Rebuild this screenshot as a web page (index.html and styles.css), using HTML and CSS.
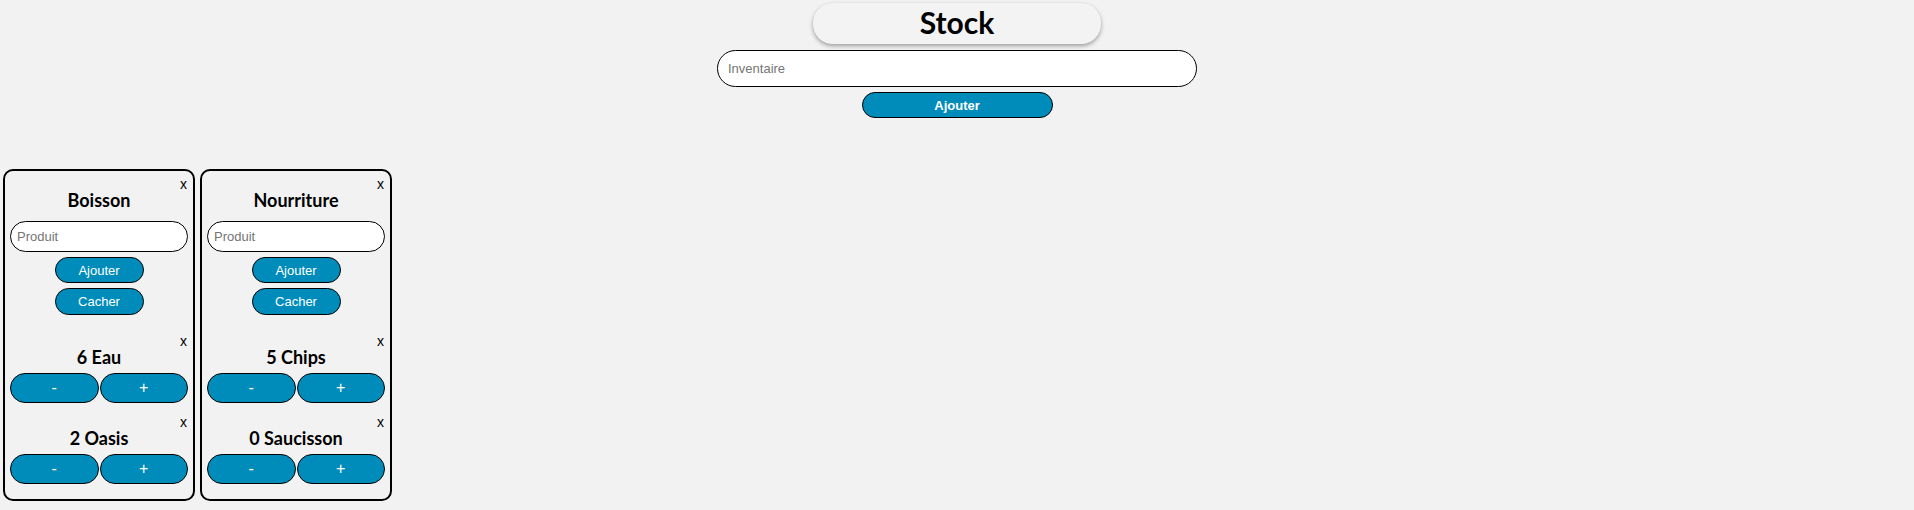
FILE: index.html
```html
<!DOCTYPE html>
<html lang="fr">
<head>
<meta charset="utf-8">
<title>Stock</title>
<link rel="stylesheet" href="styles.css">
</head>
<body>
<header class="top">
  <h1 class="title">Stock</h1>
  <input class="main-input" type="text" placeholder="Inventaire">
  <button class="btn main-btn">Ajouter</button>
</header>
<main class="cards">
  <section class="card">
    <div class="close-row"><button class="close">x</button></div>
    <h3 class="card-title">Boisson</h3>
    <input class="card-input" type="text" placeholder="Produit">
    <button class="btn small-btn first">Ajouter</button>
    <button class="btn small-btn">Cacher</button>
    <div class="item">
      <div class="close-row"><button class="close">x</button></div>
      <h3 class="item-title">6 Eau</h3>
      <div class="pm"><button class="btn pm-btn">-</button><button class="btn pm-btn">+</button></div>
    </div>
    <div class="item">
      <div class="close-row"><button class="close">x</button></div>
      <h3 class="item-title">2 Oasis</h3>
      <div class="pm"><button class="btn pm-btn">-</button><button class="btn pm-btn">+</button></div>
    </div>
  </section>
  <section class="card">
    <div class="close-row"><button class="close">x</button></div>
    <h3 class="card-title">Nourriture</h3>
    <input class="card-input" type="text" placeholder="Produit">
    <button class="btn small-btn first">Ajouter</button>
    <button class="btn small-btn">Cacher</button>
    <div class="item">
      <div class="close-row"><button class="close">x</button></div>
      <h3 class="item-title">5 Chips</h3>
      <div class="pm"><button class="btn pm-btn">-</button><button class="btn pm-btn">+</button></div>
    </div>
    <div class="item">
      <div class="close-row"><button class="close">x</button></div>
      <h3 class="item-title">0 Saucisson</h3>
      <div class="pm"><button class="btn pm-btn">-</button><button class="btn pm-btn">+</button></div>
    </div>
  </section>
</main>
</body>
</html>
```
FILE: styles.css
```css
* { box-sizing: border-box; }
html, body { margin: 0; padding: 0; }
body {
  background: #f2f2f2;
  font-family: "Liberation Sans", Arial, sans-serif;
  font-size: 13px;
  color: #000;
}
.top {
  display: flex;
  flex-direction: column;
  align-items: center;
  padding-top: 3px;
}
.title {
  margin: 0;
  width: 288px;
  height: 41px;
  border-radius: 20px;
  background: #f3f3f3;
  box-shadow: 0 2px 4px rgba(0, 0, 0, 0.35);
  font-family: Lato, "Noto Sans", sans-serif;
  font-weight: 700;
  font-size: 30px;
  line-height: 38px;
  text-align: center;
}
.main-input {
  margin-top: 6px;
  width: 480px;
  height: 37px;
  border: 1px solid #000;
  border-radius: 19px;
  padding: 0 10px;
  font-family: "Liberation Sans", Arial, sans-serif;
  font-size: 13px;
  background: #fff;
  outline: none;
}
.main-input::placeholder, .card-input::placeholder { color: #757575; }
.btn {
  background: #008cba;
  color: #fff;
  border: 1px solid #000;
  font-family: "Liberation Sans", Arial, sans-serif;
  font-size: 13px;
  padding: 0;
  cursor: pointer;
}
.main-btn {
  margin-top: 5px;
  width: 191px;
  height: 26px;
  border-radius: 13px;
  font-weight: 700;
}
.cards {
  display: flex;
  align-items: flex-start;
  gap: 5px;
  margin-top: 51px;
  padding-left: 3px;
}
.card {
  width: 192px;
  border: 2px solid #000;
  border-radius: 10px;
  padding: 7px 5px 15px;
  display: flex;
  flex-direction: column;
  align-items: center;
}
.close-row {
  align-self: stretch;
  display: flex;
  justify-content: flex-end;
  height: 12px;
}
.close {
  border: none;
  background: transparent;
  padding: 0 1px 0 0;
  font-family: "Liberation Sans", Arial, sans-serif;
  font-size: 14px;
  line-height: 12px;
  height: 12px;
  color: #000;
}
.card-title, .item-title {
  margin: 0;
  font-family: Lato, "Noto Sans", sans-serif;
  font-weight: 700;
  font-size: 18px;
  line-height: 20px;
  text-align: center;
}
.card-input {
  margin-top: 11px;
  align-self: stretch;
  height: 31px;
  border: 1px solid #000;
  border-radius: 16px;
  padding: 0 6px;
  font-family: "Liberation Sans", Arial, sans-serif;
  font-size: 13px;
  background: #fff;
  outline: none;
}
.small-btn {
  width: 89px;
  height: 27px;
  border-radius: 14px;
  margin-top: 5px;
}
.small-btn.first { height: 26px; margin-top: 5px; }
.item {
  align-self: stretch;
  display: flex;
  flex-direction: column;
  margin-top: 20px;
}
.item + .item { margin-top: 13px; }
.pm {
  display: flex;
  gap: 1px;
  margin-top: 6px;
}
.pm-btn {
  flex: 1;
  height: 30px;
  border-radius: 15px;
  font-size: 16px;
}
```
